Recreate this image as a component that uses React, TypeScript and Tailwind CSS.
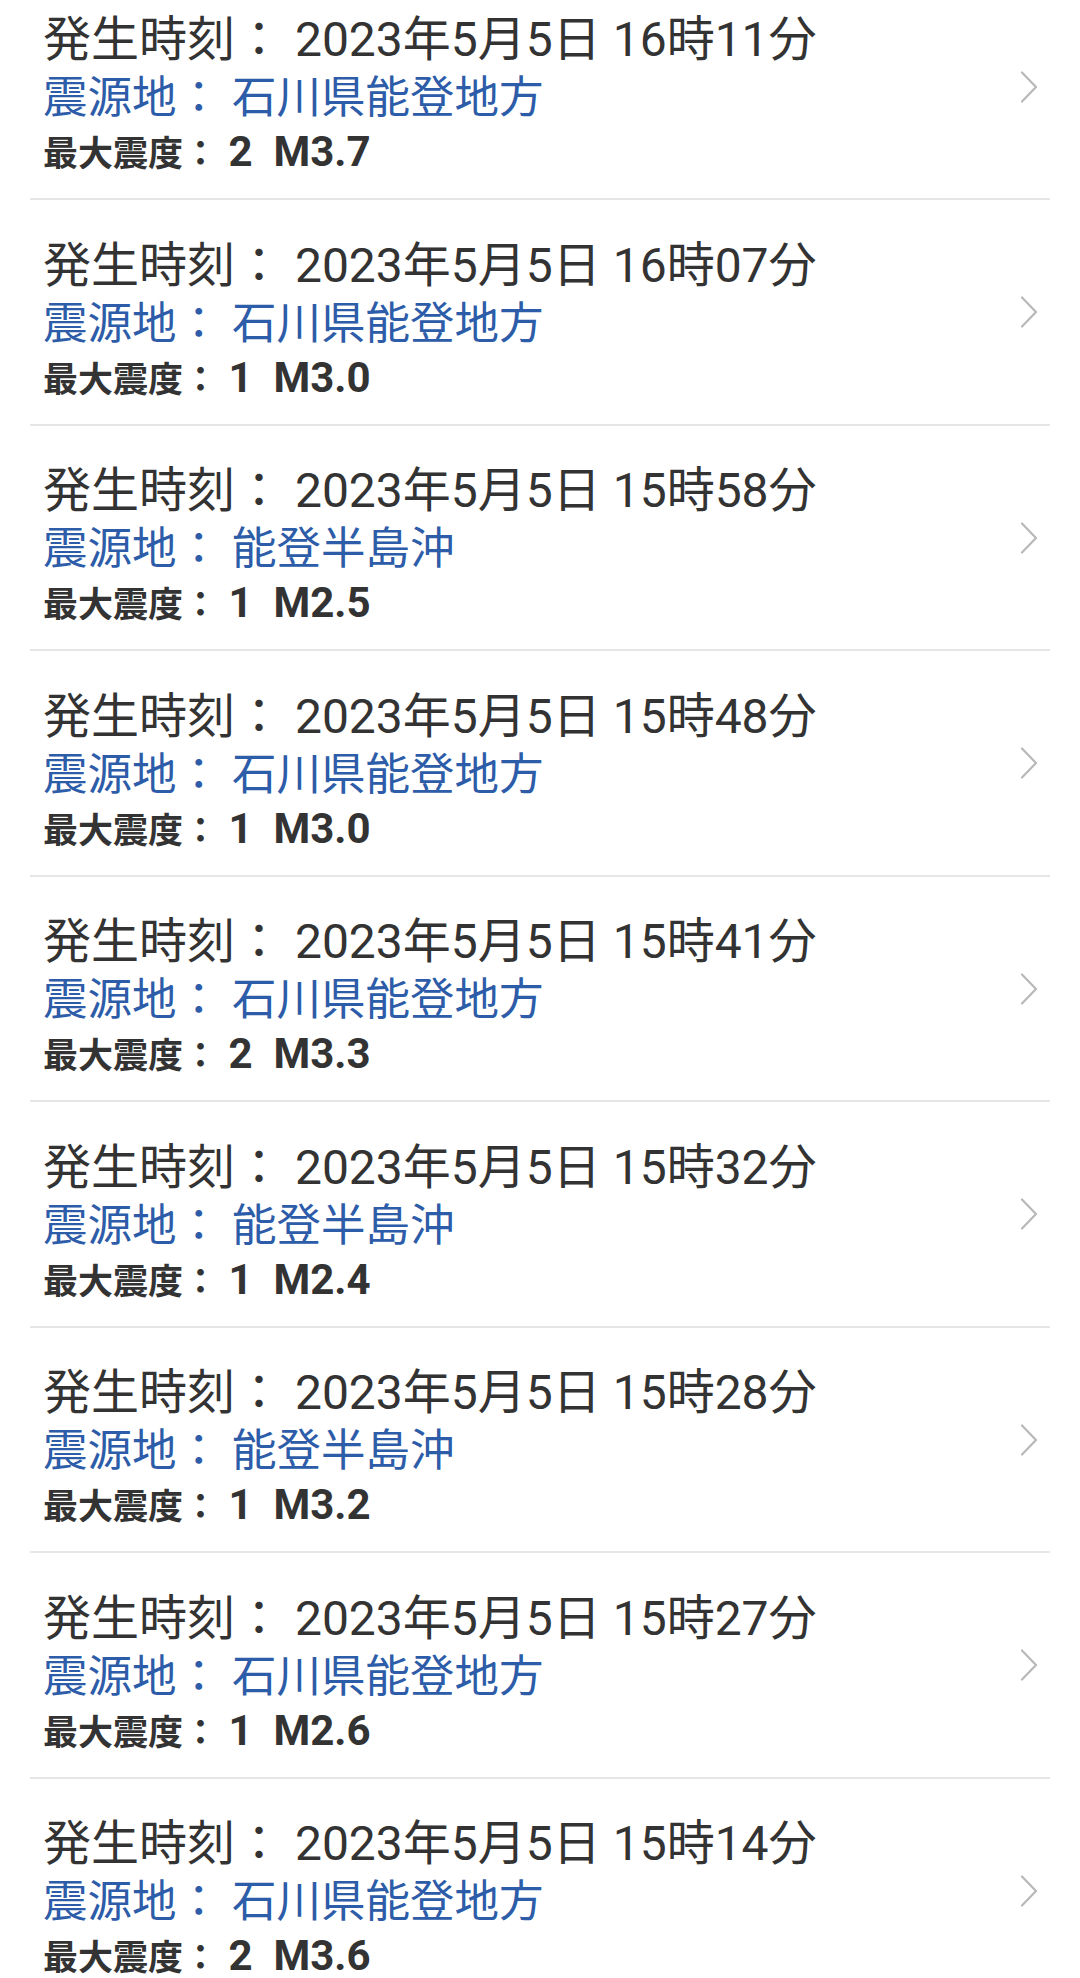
import React from "react";

type Quake = { time: string; place: string; intensity: string; mag: string };

const quakes: Quake[] = [
  { time: "16時11分", place: "石川県能登地方", intensity: "2", mag: "M3.7" },
  { time: "16時07分", place: "石川県能登地方", intensity: "1", mag: "M3.0" },
  { time: "15時58分", place: "能登半島沖", intensity: "1", mag: "M2.5" },
  { time: "15時48分", place: "石川県能登地方", intensity: "1", mag: "M3.0" },
  { time: "15時41分", place: "石川県能登地方", intensity: "2", mag: "M3.3" },
  { time: "15時32分", place: "能登半島沖", intensity: "1", mag: "M2.4" },
  { time: "15時28分", place: "能登半島沖", intensity: "1", mag: "M3.2" },
  { time: "15時27分", place: "石川県能登地方", intensity: "1", mag: "M2.6" },
  { time: "15時14分", place: "石川県能登地方", intensity: "2", mag: "M3.6" },
];

function Chevron() {
  return (
    <svg width="18" height="32" viewBox="0 0 18 32" fill="none" className="shrink-0">
      <path d="M2 1.5 L16 16 L2 30.5" stroke="#b8b8b8" strokeWidth="2.2" strokeLinecap="round" strokeLinejoin="round" />
    </svg>
  );
}

function Row({ q }: { q: Quake }) {
  return (
    <div className="mx-[30px] h-[225.5px] border-b-2 border-[#e6e6e6] flex items-center justify-between">
      <div className="pl-[13px] pt-[20px] flex flex-col">
        <div className="h-[56px] leading-[56px] text-[48px] text-[#333333] whitespace-pre">
          発生時刻： 2023年5月5日 {q.time}
        </div>
        <div className="h-[56px] leading-[60px] text-[44.5px] text-[#2d5ca9] whitespace-pre">
          震源地： {q.place}
        </div>
        <div className="h-[56px] leading-[56px] font-bold text-[#333333] whitespace-pre">
          <span className="text-[35px]">最大震度：</span>
          <span className="text-[42px]"> {q.intensity}  {q.mag}</span>
        </div>
      </div>
      <div className="pr-[12px] pt-[1px]">
        <Chevron />
      </div>
    </div>
  );
}

export default function App() {
  return (
    <div className="w-[1080px] min-h-[1978px] bg-white overflow-hidden font-[Roboto,'Noto_Sans_CJK_JP',sans-serif]">
      <div className="-mt-[25.5px]">
        {quakes.map((q, i) => (
          <Row key={i} q={q} />
        ))}
      </div>
    </div>
  );
}
